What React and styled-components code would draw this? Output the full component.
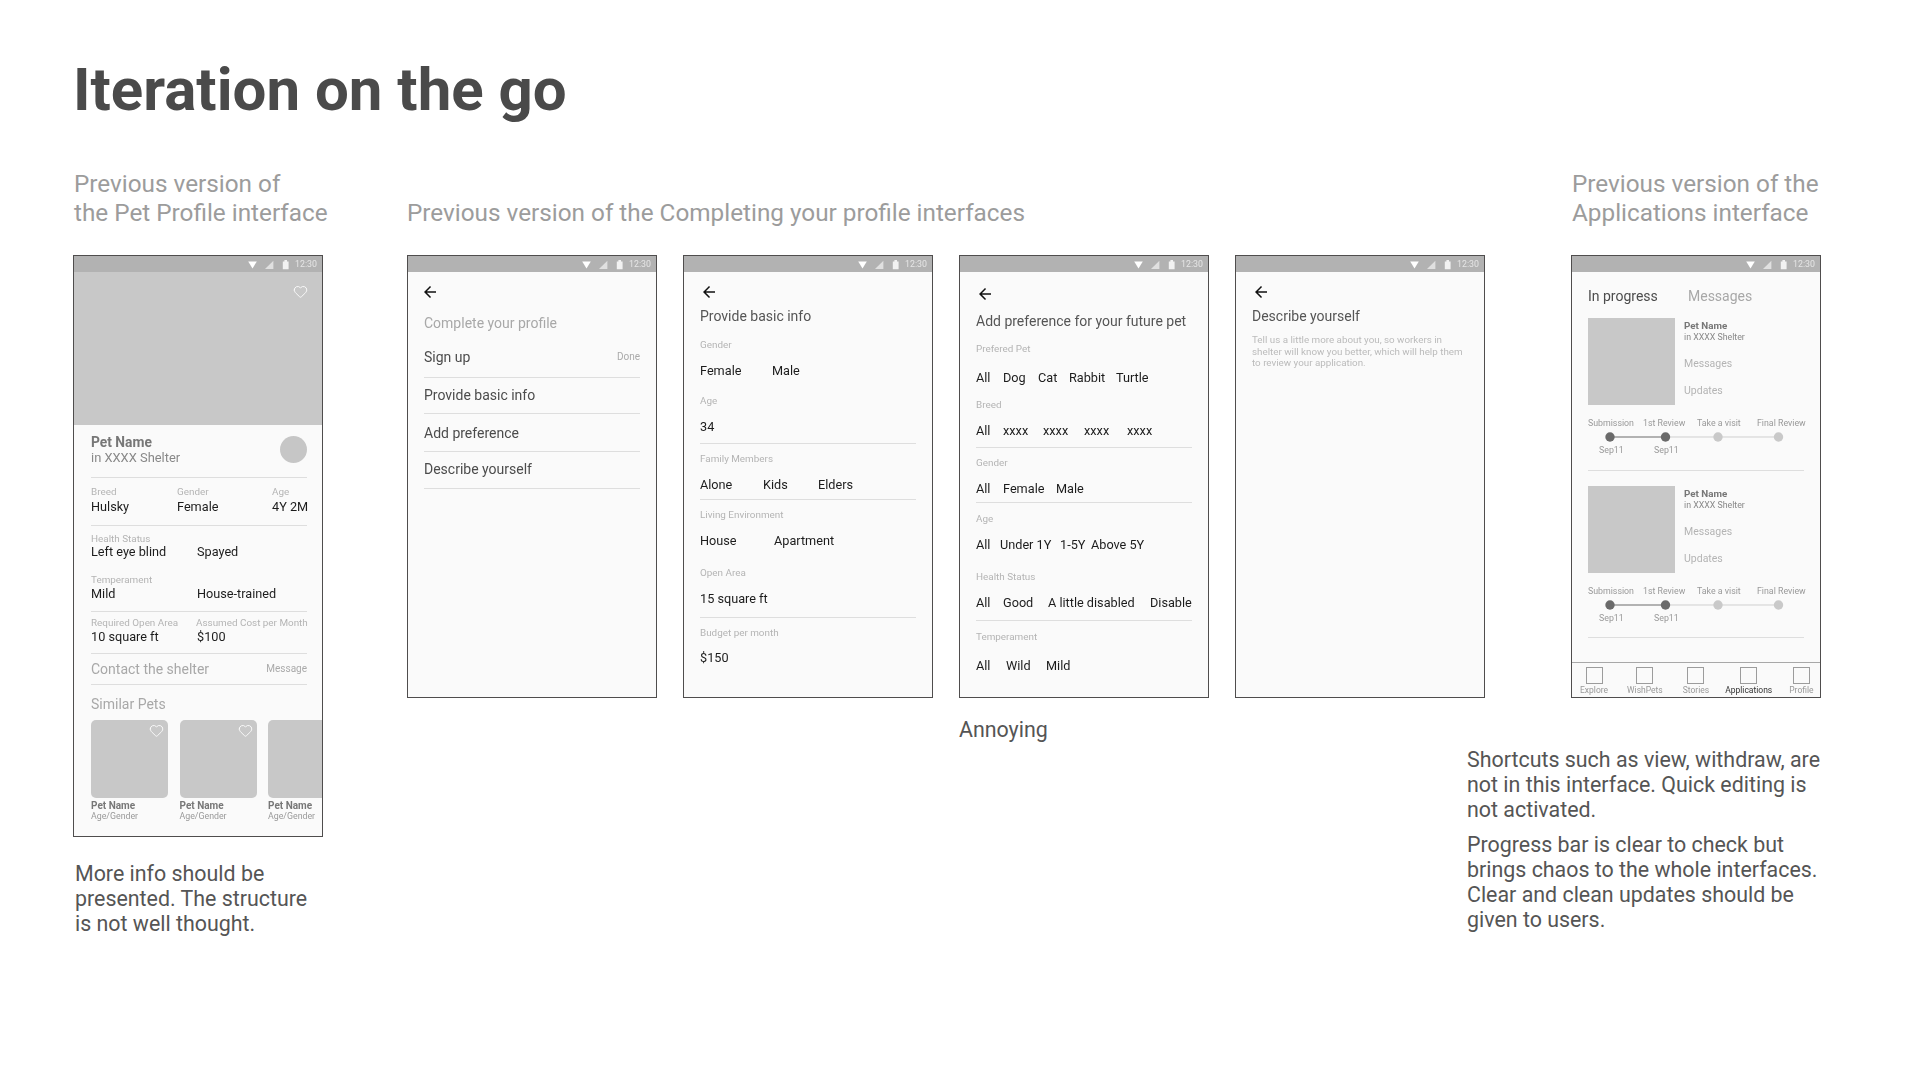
import React from 'react';
import styled, { createGlobalStyle, css } from 'styled-components';
import { Heart } from 'lucide-react';
import { MdArrowBack } from 'react-icons/md';

const GlobalStyle = createGlobalStyle`
  html, body {
    margin: 0;
    background: #fff;
    font-family: Roboto, "Liberation Sans", sans-serif;
  }
`;

const Page = styled.div`
  width: 1920px;
  height: 1080px;
  padding: 55px 0 0 73px;
  box-sizing: border-box;
  overflow: hidden;
`;

const Title = styled.h1`
  margin: 0;
  font-size: 60px;
  line-height: 70px;
  font-weight: 700;
  color: #4a4a4a;
`;

const Columns = styled.div`
  display: flex;
  margin-top: 44px;
`;

const Section = styled.section`
  display: flex;
  flex-direction: column;
  flex: none;
  width: ${(p) => p.$w}px;
  margin-left: ${(p) => p.$ml || 0}px;
`;

const Heading = styled.h2`
  margin: 0 0 28px ${(p) => p.$ml || 0}px;
  height: 58px;
  display: flex;
  align-items: flex-end;
  font-size: 24.3px;
  line-height: 29px;
  font-weight: 400;
  color: #9c9c9c;
  white-space: pre;
`;

const PhoneRow = styled.div`
  display: flex;
  gap: 26px;
`;

const Note = styled.p`
  margin: ${(p) => p.$mt}px 0 0 ${(p) => p.$ml || 0}px;
  font-size: 21.4px;
  line-height: 25px;
  color: #555;
  white-space: pre;
`;

const RightNotes = styled.div`
  align-self: flex-end;
  flex: none;
  width: 354px;
`;

const Phone = styled.div`
  position: relative;
  flex: none;
  display: flex;
  flex-direction: column;
  width: 250px;
  height: ${(p) => p.$h}px;
  box-sizing: border-box;
  border: 1px solid #4f4d4d;
  background: #fafafa;
  overflow: hidden;
  filter: blur(0.3px);
`;

const Bar = styled.div`
  flex: none;
  height: 16px;
  background: #b2b2b2;
  display: flex;
  align-items: center;
  justify-content: flex-end;
  padding-right: 5px;
  gap: 6px;
`;

const Clock = styled.span`
  font-size: 8.8px;
  color: #e6e6e6;
`;

const Content = styled.div`
  padding: 0 ${(p) => p.$pr || 16}px 0 ${(p) => p.$pl || 16}px;
  display: flex;
  flex-direction: column;
`;

const Hero = styled.div`
  position: relative;
  flex: none;
  height: 153px;
  background: #c8c8c8;
`;

const Favourite = styled(Heart)`
  position: absolute;
  top: ${(p) => p.$t}px;
  right: ${(p) => p.$r}px;
  color: #fff;
`;

const kinds = {
  label: css`font-size: 9.9px; color: #b4b4b4;`,
  value: css`font-size: 12.7px; color: #1c1c1c;`,
  step: css`font-size: 8.8px; color: #999;`,
  title: css`font-size: 14px; color: #555;`,
  faded: css`font-size: 14px; color: #a8a8a8;`,
  item: css`font-size: 14px; color: #4c4c4c;`,
  desc: css`font-size: 9.8px; color: #bbb;`,
  cardName: css`font-size: 9.8px; font-weight: 700; color: #777;`,
  cardSub: css`font-size: 8.8px; color: #888;`,
  cardLink: css`font-size: 10.5px; color: #b4b4b4;`,
};

const heights = { label: 12, value: 16, step: 12, title: 18, faded: 18, item: 18, desc: 12, cardName: 12, cardSub: 12, cardLink: 12, rule: 1, back: 18 };

const Row = styled.div`
  flex: none;
  display: flex;
  align-items: center;
  height: ${(p) => p.$h}px;
  margin-top: ${(p) => p.$mt}px;
  line-height: ${(p) => p.$h}px;
  white-space: nowrap;
  ${(p) => kinds[p.$kind]}
`;

const Cell = styled.span`
  flex: none;
  width: ${(p) => (p.$w ? `${p.$w}px` : 'auto')};
  ${(p) => p.$faded && 'color: #a8a8a8;'}
`;

const EndNote = styled.span`
  margin-left: auto;
  font-size: 10px;
  color: #aaa;
`;

const Rule = styled.div`
  flex: none;
  height: 1px;
  margin-top: ${(p) => p.$mt}px;
  background: #dedede;
`;

const BackButton = styled.div`
  flex: none;
  height: 18px;
  margin: ${(p) => p.$mt}px 0 0 ${(p) => p.$ml}px;
  color: #111;
`;

// rows carry the y centre from the mock, margins are worked out from those
function Stack({ top, rows }) {
  let y = top;
  return rows.map((r, i) => {
    const h = heights[r.kind];
    const mt = r.c - h / 2 - y;
    y = r.c + h / 2;
    if (r.kind === 'rule') return <Rule key={i} $mt={mt} />;
    if (r.kind === 'back') return <BackButton key={i} $mt={mt} $ml={r.x ?? -3}><MdArrowBack size={18} /></BackButton>;
    const cells = r.cells || [[r.text, 0]];
    return (
      <Row key={i} $h={h} $mt={mt} $kind={r.kind}>
        {r.pad ? <Cell $w={r.pad} /> : null}
        {cells.map((cell, j) => (
          <Cell key={j} $w={cells[j + 1] ? cells[j + 1][1] - cell[1] : 0} $faded={cell[2]}>{cell[0]}</Cell>
        ))}
        {r.end ? <EndNote>{r.end}</EndNote> : null}
      </Row>
    );
  });
}

function StatusBar() {
  return (
    <Bar>
      <svg width="41" height="12" viewBox="0 0 41 12">
        <path d="M0.2 3.6h8.6L4.5 10.4z" fill="#fff" />
        <path d="M17 11L25.4 2.7V11z" fill="#e0e0e0" />
        <path d="M34.8 3.4h1.6V2h2.6v1.4h1.6v7.9h-5.8z" fill="#f2f2f2" />
      </svg>
      <Clock>12:30</Clock>
    </Bar>
  );
}

const PetHead = styled.div`
  display: flex;
  justify-content: space-between;
  margin-top: 9px;
  height: 32px;
`;

const PetName = styled.div`
  font-size: 13.8px;
  line-height: 16px;
  font-weight: 700;
  color: #777;
`;

const PetPlace = styled.div`
  font-size: 12.9px;
  line-height: 16px;
  color: #888;
`;

const Avatar = styled.div`
  width: 27px;
  height: 27px;
  margin-top: 2px;
  border-radius: 50%;
  background: #c6c6c6;
`;

const Similar = styled.div`
  display: flex;
  gap: 11.5px;
  margin: 7px -30px 0 0;
`;

const PetCard = styled.div`
  flex: none;
  width: 77px;
`;

const PetThumb = styled.div`
  position: relative;
  height: 78px;
  border-radius: 5px;
  background: #c8c8c8;
`;

const ThumbName = styled.div`
  margin-top: 2px;
  font-size: 10px;
  line-height: 11px;
  font-weight: 700;
  color: #777;
`;

const ThumbSub = styled.div`
  font-size: 8.8px;
  line-height: 11px;
  color: #999;
`;

function ProfilePhone() {
  return (
    <Phone $h={582}>
      <StatusBar />
      <Hero><Favourite size={15} strokeWidth={1.4} $t={12} $r={14} /></Hero>
      <Content $pl={17} $pr={15}>
        <PetHead>
          <div>
            <PetName>Pet Name</PetName>
            <PetPlace>in XXXX Shelter</PetPlace>
          </div>
          <Avatar />
        </PetHead>
        <Stack
          top={466}
          rows={[
            { kind: 'rule', c: 477 },
            { kind: 'label', c: 492, cells: [['Breed', 0], ['Gender', 86], ['Age', 181]] },
            { kind: 'value', c: 507, cells: [['Hulsky', 0], ['Female', 86], ['4Y 2M', 181]] },
            { kind: 'rule', c: 525 },
            { kind: 'label', c: 539, text: 'Health Status' },
            { kind: 'value', c: 552, cells: [['Left eye blind', 0], ['Spayed', 106]] },
            { kind: 'label', c: 580, text: 'Temperament' },
            { kind: 'value', c: 594, cells: [['Mild', 0], ['House-trained', 106]] },
            { kind: 'rule', c: 611 },
            { kind: 'label', c: 623, cells: [['Required Open Area', 0], ['Assumed Cost per Month', 105]] },
            { kind: 'value', c: 637, cells: [['10 square ft', 0], ['$100', 106]] },
            { kind: 'rule', c: 653 },
            { kind: 'faded', c: 669, text: 'Contact the shelter', end: 'Message' },
            { kind: 'rule', c: 684 },
            { kind: 'faded', c: 704, text: 'Similar Pets' },
          ]}
        />
        <Similar>
          {[0, 1, 2].map((i) => (
            <PetCard key={i}>
              <PetThumb><Favourite size={15} strokeWidth={1.4} $t={3} $r={4} /></PetThumb>
              <ThumbName>Pet Name</ThumbName>
              <ThumbSub>Age/Gender</ThumbSub>
            </PetCard>
          ))}
        </Similar>
      </Content>
    </Phone>
  );
}

const FormPhone = ({ rows }) => (
  <Phone $h={443}>
    <StatusBar />
    <Content><Stack top={272} rows={rows} /></Content>
  </Phone>
);

const completeRows = [
  { kind: 'back', c: 292 },
  { kind: 'faded', c: 323, text: 'Complete your profile' },
  { kind: 'item', c: 357, text: 'Sign up', end: 'Done' },
  { kind: 'rule', c: 377 },
  { kind: 'item', c: 395, text: 'Provide basic info' },
  { kind: 'rule', c: 413 },
  { kind: 'item', c: 433, text: 'Add preference' },
  { kind: 'rule', c: 451 },
  { kind: 'item', c: 469, text: 'Describe yourself' },
  { kind: 'rule', c: 488 },
];

const basicRows = [
  { kind: 'back', c: 292, x: 0 },
  { kind: 'title', c: 316, text: 'Provide basic info' },
  { kind: 'label', c: 345, text: 'Gender' },
  { kind: 'value', c: 371, cells: [['Female', 0], ['Male', 72]] },
  { kind: 'label', c: 401, text: 'Age' },
  { kind: 'value', c: 427, text: '34' },
  { kind: 'rule', c: 443 },
  { kind: 'label', c: 459, text: 'Family Members' },
  { kind: 'value', c: 485, cells: [['Alone', 0], ['Kids', 63], ['Elders', 118]] },
  { kind: 'rule', c: 499 },
  { kind: 'label', c: 515, text: 'Living Environment' },
  { kind: 'value', c: 541, cells: [['House', 0], ['Apartment', 74]] },
  { kind: 'label', c: 573, text: 'Open Area' },
  { kind: 'value', c: 599, text: '15 square ft' },
  { kind: 'rule', c: 617 },
  { kind: 'label', c: 633, text: 'Budget per month' },
  { kind: 'value', c: 658, text: '$150' },
];

const preferenceRows = [
  { kind: 'back', c: 294, x: 0 },
  { kind: 'title', c: 321, text: 'Add preference for your future pet' },
  { kind: 'label', c: 349, text: 'Prefered Pet' },
  { kind: 'value', c: 378, cells: [['All', 0], ['Dog', 27], ['Cat', 62], ['Rabbit', 93], ['Turtle', 140]] },
  { kind: 'label', c: 405, text: 'Breed' },
  { kind: 'value', c: 431, cells: [['All', 0], ['xxxx', 27], ['xxxx', 67], ['xxxx', 108], ['xxxx', 151]] },
  { kind: 'rule', c: 447 },
  { kind: 'label', c: 463, text: 'Gender' },
  { kind: 'value', c: 489, cells: [['All', 0], ['Female', 27], ['Male', 80]] },
  { kind: 'rule', c: 502 },
  { kind: 'label', c: 519, text: 'Age' },
  { kind: 'value', c: 545, cells: [['All', 0], ['Under 1Y', 24], ['1-5Y', 84], ['Above 5Y', 115]] },
  { kind: 'label', c: 577, text: 'Health Status' },
  { kind: 'value', c: 603, cells: [['All', 0], ['Good', 27], ['A little disabled', 72], ['Disable', 174]] },
  { kind: 'rule', c: 620 },
  { kind: 'label', c: 637, text: 'Temperament' },
  { kind: 'value', c: 666, cells: [['All', 0], ['Wild', 30], ['Mild', 70]] },
];

const describeRows = [
  { kind: 'back', c: 292, x: 0 },
  { kind: 'title', c: 316, text: 'Describe yourself' },
  { kind: 'desc', c: 340, text: 'Tell us a little more about you, so workers in' },
  { kind: 'desc', c: 352, text: 'shelter will know you better, which will help them' },
  { kind: 'desc', c: 363, text: 'to review your application.' },
];

const Tabs = styled.div`
  display: flex;
  flex-direction: column;
`;

const AppCard = styled.div`
  display: flex;
  flex-direction: column;
  margin-top: ${(p) => p.$mt}px;
`;

const AppTop = styled.div`
  display: flex;
  gap: 9px;
`;

const AppThumb = styled.div`
  flex: none;
  width: 87px;
  height: 87px;
  background: #c8c8c8;
`;

const AppInfo = styled.div`
  display: flex;
  flex-direction: column;
`;

const Track = styled.svg`
  display: block;
  flex: none;
  margin-top: 2px;
`;

function Progress() {
  return (
    <Track width="216" height="12" viewBox="0 0 216 12">
      <path d="M22 6H77.5" stroke="#6a6a6a" strokeWidth="1" />
      <path d="M77.5 6H190.5" stroke="#cfcfcf" strokeWidth="1" />
      <circle cx="22" cy="6" r="4.7" fill="#6a6a6a" />
      <circle cx="77.5" cy="6" r="4.7" fill="#6a6a6a" />
      <circle cx="130" cy="6" r="4.7" fill="#c9c9c9" />
      <circle cx="190.5" cy="6" r="4.7" fill="#c9c9c9" />
    </Track>
  );
}

function Application({ mt }) {
  return (
    <AppCard $mt={mt}>
      <AppTop>
        <AppThumb />
        <AppInfo>
          <Stack
            top={318}
            rows={[
              { kind: 'cardName', c: 326, text: 'Pet Name' },
              { kind: 'cardSub', c: 337, text: 'in XXXX Shelter' },
              { kind: 'cardLink', c: 364, text: 'Messages' },
              { kind: 'cardLink', c: 391, text: 'Updates' },
            ]}
          />
        </AppInfo>
      </AppTop>
      <Stack top={405} rows={[{ kind: 'step', c: 423, cells: [['Submission', 0], ['1st Review', 55], ['Take a visit', 109], ['Final Review', 169]] }]} />
      <Progress />
      <Stack
        top={443}
        rows={[
          { kind: 'step', c: 450, cells: [['Sep11', 11], ['Sep11', 66]], pad: 11 },
          { kind: 'rule', c: 470 },
        ]}
      />
    </AppCard>
  );
}

const Nav = styled.nav`
  margin-top: auto;
  height: 35px;
  box-sizing: border-box;
  border-top: 1px solid #a8a8a8;
  display: flex;
  padding: 4px 0 0 8px;
`;

const NavItem = styled.div`
  display: flex;
  flex-direction: column;
  align-items: center;
  margin-left: ${(p) => p.$ml}px;
  font-size: 8.5px;
  line-height: 12px;
  color: ${(p) => (p.$active ? '#333' : '#999')};
`;

const NavBox = styled.div`
  width: 17px;
  height: 17px;
  box-sizing: border-box;
  border: 1px solid #9c9c9c;
`;

const navItems = [['Explore', 0], ['WishPets', 19], ['Stories', 20], ['Applications', 16], ['Profile', 17]];

function ApplicationsPhone() {
  return (
    <Phone $h={443}>
      <StatusBar />
      <Content>
        <Tabs>
          <Stack top={272} rows={[{ kind: 'item', c: 296, cells: [['In progress', 0], ['Messages', 100, true]] }]} />
        </Tabs>
        <Application mt={13} />
        <Application mt={15} />
      </Content>
      <Nav>
        {navItems.map(([name, ml]) => (
          <NavItem key={name} $ml={ml} $active={name === 'Applications'}>
            <NavBox />
            {name}
          </NavItem>
        ))}
      </Nav>
    </Phone>
  );
}

export default function App() {
  return (
    <Page>
      <GlobalStyle />
      <Title>Iteration on the go</Title>
      <Columns>
        <Section $w={250}>
          <Heading $ml={1}>{'Previous version of\nthe Pet Profile interface'}</Heading>
          <ProfilePhone />
          <Note $mt={24} $ml={2}>{'More info should be\npresented. The structure\nis not well thought.'}</Note>
        </Section>
        <Section $w={1078} $ml={84}>
          <Heading>Previous version of the Completing your profile interfaces</Heading>
          <PhoneRow>
            <FormPhone rows={completeRows} />
            <FormPhone rows={basicRows} />
            <FormPhone rows={preferenceRows} />
            <FormPhone rows={describeRows} />
          </PhoneRow>
          <Note $mt={19} $ml={552}>Annoying</Note>
        </Section>
        <Section $w={250} $ml={86}>
          <Heading $ml={1}>{'Previous version of the\nApplications interface'}</Heading>
          <ApplicationsPhone />
          <RightNotes>
            <Note $mt={49}>{'Shortcuts such as view, withdraw, are\nnot in this interface. Quick editing is\nnot activated.'}</Note>
            <Note $mt={10}>{'Progress bar is clear to check but\nbrings chaos to the whole interfaces.\nClear and clean updates should be\ngiven to users.'}</Note>
          </RightNotes>
        </Section>
      </Columns>
    </Page>
  );
}
